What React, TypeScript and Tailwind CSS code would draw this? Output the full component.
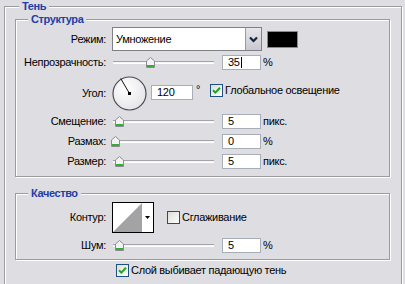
import React from "react";

const etched =
  "border border-[#9b9ba1] shadow-[inset_1px_1px_0_#ffffff,1px_1px_0_#ffffff]";

function Thumb({ left }: { left: number }) {
  return (
    <svg
      className="absolute top-0"
      style={{ left }}
      width="9"
      height="11"
      viewBox="0 0 9 11"
    >
      <path
        d="M0.5 4 L4.5 0.5 L8.5 4 L8.5 10.5 L0.5 10.5 Z"
        fill="#f2f2f2"
        stroke="#8c8c90"
      />
      <rect x="1" y="8" width="7" height="2" fill="#3aa83a" />
    </svg>
  );
}

function Slider({ left }: { left: number }) {
  return (
    <div className="relative ml-[7px] h-[11px] w-[101px] shrink-0">
      <div className="absolute inset-x-0 top-[4px] h-[3px] border-t border-[#a3a3a8] bg-[#f4f4f6] border-b border-b-white" />
      <Thumb left={left} />
    </div>
  );
}

function Field({
  value,
  w = 39,
  caret = false,
}: {
  value: string;
  w?: number;
  caret?: boolean;
}) {
  return (
    <div
      className={`flex h-[15px] items-center border border-[#a7aeb8] bg-white pl-[5px] leading-[13px] ${
        w === 42 ? "w-[42px]" : "w-[39px]"
      }`}
    >
      <span>{value}</span>
      {caret && <span className="ml-px h-[11px] w-px bg-black" />}
    </div>
  );
}

function Check({ checked }: { checked: boolean }) {
  return (
    <div className="flex h-[13px] w-[13px] shrink-0 items-center justify-center border border-[#1c5180] bg-gradient-to-br from-[#dcdcd7] to-white">
      {checked && (
        <svg width="9" height="9" viewBox="0 0 9 9">
          <path
            d="M1 4.2 L3.4 6.6 L8 1.8"
            fill="none"
            stroke="#21a121"
            strokeWidth="2"
          />
        </svg>
      )}
    </div>
  );
}

function Label({ children }: { children: React.ReactNode }) {
  return <div className="w-[90px] shrink-0 text-right">{children}</div>;
}

function Dial() {
  return (
    <svg className="ml-[6px] shrink-0" width="35" height="35" viewBox="0 0 35 35">
      <defs>
        <radialGradient id="dg" cx="0.4" cy="0.35" r="0.7">
          <stop offset="0" stopColor="#ffffff" />
          <stop offset="1" stopColor="#e4e4e8" />
        </radialGradient>
      </defs>
      <circle cx="17.5" cy="17.5" r="16.5" fill="url(#dg)" stroke="#4c4c52" strokeWidth="1.2" />
      <line x1="17.5" y1="17.5" x2="8.7" y2="2.5" stroke="#111" strokeWidth="1" />
      <rect x="16" y="16" width="3" height="3" fill="#000" />
    </svg>
  );
}

const legend =
  "bg-[#dedde2] px-[3px] font-bold leading-[13px] tracking-[-0.4px] text-[#1d3fa6]";

export default function App() {
  return (
    <div className="h-[284px] w-[405px] overflow-hidden bg-[#dedde2] font-['Liberation_Sans',Arial,sans-serif] text-[11px] leading-[13px] tracking-[-0.3px] text-black">
      <fieldset className={`ml-[4px] h-[320px] w-[398px] ${etched}`}>
        <legend className={`ml-[14px] ${legend}`}>Тень</legend>

        <fieldset className={`ml-[10px] w-[375px] pb-[5px] ${etched}`}>
          <legend className={`ml-[12px] ${legend}`}>Структура</legend>

          {/* Режим */}
          <div className="mt-[1px] flex h-[24px] items-center">
            <Label>Режим:</Label>
            <div className="ml-[6px] flex h-[24px] w-[150px] border border-[#7f8188] bg-white">
              <div className="flex flex-1 items-center pl-[3px]">Умножение</div>
              <div className="flex w-[16px] items-center justify-center border-l border-[#9a9aa2] bg-gradient-to-b from-[#e6e6ea] to-[#c9c9cf]">
                <svg width="9" height="7" viewBox="0 0 9 7">
                  <path d="M1 1.5 L4.5 5 L8 1.5" fill="none" stroke="#15233f" strokeWidth="2.2" />
                </svg>
              </div>
            </div>
            <div className="ml-[5px] h-[17px] w-[31px] border border-[#8a8a8e] bg-black" />
          </div>

          {/* Непрозрачность */}
          <div className="flex h-[22px] items-center">
            <Label>Непрозрачность:</Label>
            <Slider left={33} />
            <div className="ml-[8px]">
              <Field value="35" caret />
            </div>
            <span className="ml-[2px]">%</span>
          </div>

          {/* Угол */}
          <div className="mt-[3px] flex h-[35px] items-center">
            <Label>Угол:</Label>
            <Dial />
            <div className="ml-[4px] self-start mt-[9px]">
              <Field value="120" w={42} />
            </div>
            <span className="ml-[3px] self-start mt-[7px]">°</span>
            <div className="ml-[10px] flex items-center self-start mt-[8px]">
              <Check checked />
              <span className="ml-[2px]">Глобальное освещение</span>
            </div>
          </div>

          {/* Смещение */}
          <div className="flex h-[20px] items-center">
            <Label>Смещение:</Label>
            <Slider left={2} />
            <div className="ml-[8px]">
              <Field value="5" />
            </div>
            <span className="ml-[2px]">пикс.</span>
          </div>

          {/* Размах */}
          <div className="flex h-[20px] items-center">
            <Label>Размах:</Label>
            <Slider left={-2} />
            <div className="ml-[8px]">
              <Field value="0" />
            </div>
            <span className="ml-[2px]">%</span>
          </div>

          {/* Размер */}
          <div className="flex h-[20px] items-center">
            <Label>Размер:</Label>
            <Slider left={2} />
            <div className="ml-[8px]">
              <Field value="5" />
            </div>
            <span className="ml-[2px]">пикс.</span>
          </div>
        </fieldset>

        <fieldset className={`ml-[10px] mt-[10px] w-[375px] pb-[4px] ${etched}`}>
          <legend className={`ml-[12px] ${legend}`}>Качество</legend>

          {/* Контур */}
          <div className="mt-[2px] flex h-[31px] items-center">
            <Label>Контур:</Label>
            <div className="ml-[6px] flex h-[31px] w-[42px] border border-black bg-white">
              <svg width="29" height="29" viewBox="0 0 29 29">
                <polygon points="0,29 29,0 29,29" fill="#a3a3a6" />
              </svg>
              <div className="flex flex-1 items-center justify-center">
                <svg width="5" height="3" viewBox="0 0 5 3">
                  <polygon points="0,0 5,0 2.5,3" fill="#000" />
                </svg>
              </div>
            </div>
            <div className="ml-[13px] flex items-center">
              <Check checked={false} />
              <span className="ml-[2px]">Сглаживание</span>
            </div>
          </div>

          {/* Шум */}
          <div className="mt-[2px] flex h-[20px] items-center">
            <Label>Шум:</Label>
            <Slider left={2} />
            <div className="ml-[8px]">
              <Field value="5" />
            </div>
            <span className="ml-[2px]">%</span>
          </div>
        </fieldset>

        <div className="flex h-[20px] items-center pl-[111px]">
          <Check checked />
          <span className="ml-[2px]">Слой выбивает падающую тень</span>
        </div>
      </fieldset>
    </div>
  );
}
